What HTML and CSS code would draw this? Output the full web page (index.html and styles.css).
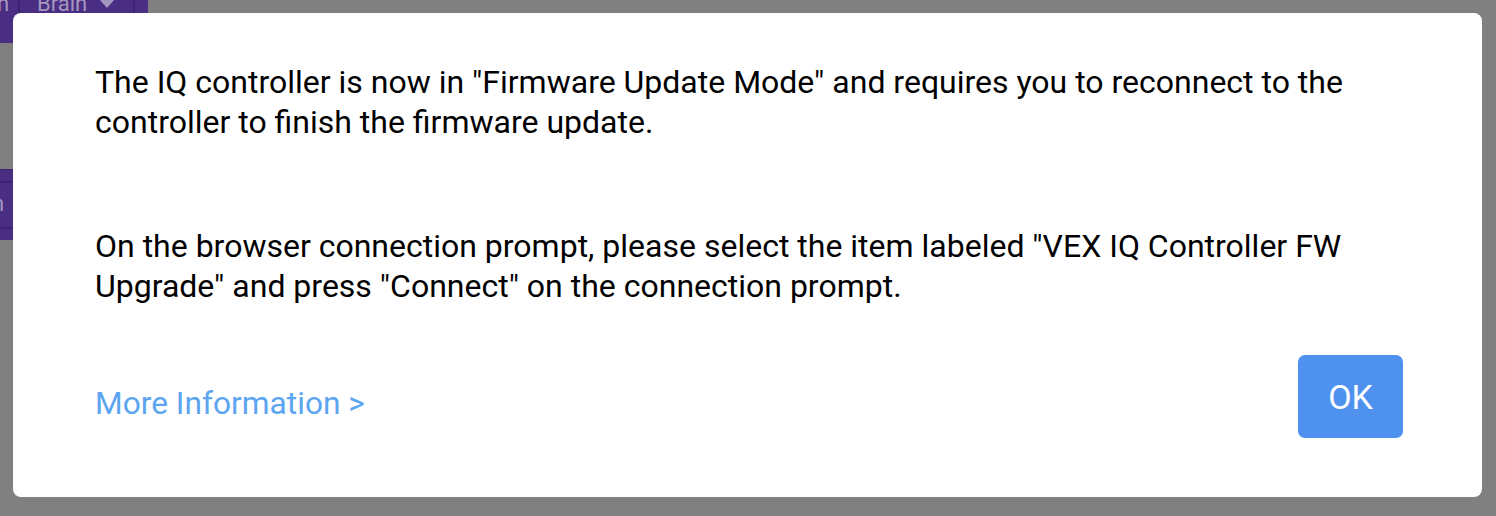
FILE: index.html
```html
<!DOCTYPE html>
<html>
<head>
<meta charset="utf-8">
<link rel="stylesheet" href="styles.css">
</head>
<body>
<div class="backdrop">
  <div class="blk blk-top">
    <span class="seg seg-a">n</span>
    <span class="seg seg-b">Brain <span class="caret"></span></span>
  </div>
  <div class="blk blk-left"><span class="seg-l">n</span></div>
</div>
<div class="dialog">
  <p class="msg">The IQ controller is now in "Firmware Update Mode" and requires you to reconnect to the controller to finish the firmware update.</p>
  <p class="msg msg-2">On the browser connection prompt, please select the item labeled "VEX IQ Controller FW Upgrade" and press "Connect" on the connection prompt.</p>
  <div class="footer">
    <a class="more" href="#">More Information &gt;</a>
    <button class="ok">OK</button>
  </div>
</div>
</body>
</html>
```

FILE: styles.css
```css
html, body {
  margin: 0;
  padding: 0;
}
body {
  background: #808080;
  width: 1496px;
  height: 516px;
  overflow: hidden;
  position: relative;
  font-family: Roboto, "Liberation Sans", Arial, sans-serif;
  padding: 13px 14px 19px 13px;
  box-sizing: border-box;
}
.backdrop {
  position: absolute;
  left: 0;
  top: 0;
}
.blk {
  position: absolute;
  background: #4a2e83;
  color: #a397bf;
  font-size: 22px;
  overflow: hidden;
}
.blk-top {
  left: 0;
  top: 0;
  width: 148px;
  height: 43px;
}
.seg {
  position: absolute;
  top: -8px;
  line-height: 24px;
}
.seg-a {
  left: -3px;
  width: 21px;
  height: 51px;
  border-right: 2px solid #3e2470;
}
.seg-b {
  left: 37px;
  width: 96px;
  height: 51px;
  border-right: 2px solid #3e2470;
}
.caret {
  display: inline-block;
  width: 0;
  height: 0;
  border-left: 8px solid transparent;
  border-right: 8px solid transparent;
  border-top: 9px solid #a397bf;
  margin-left: 6px;
  vertical-align: 3px;
}
.blk-left {
  left: 0;
  top: 169px;
  width: 13px;
  height: 70px;
  border-top: 1px solid #3e2470;
}
.blk-left::before, .blk-left::after {
  content: "";
  position: absolute;
  left: 0;
  right: 0;
  height: 2px;
  background: #3e2470;
}
.blk-left::before { top: 11px; }
.blk-left::after { top: 57px; }
.seg-l {
  position: absolute;
  left: -8px;
  top: 22px;
  line-height: 24px;
}
.dialog {
  position: relative;
  background: #ffffff;
  border-radius: 8px;
  height: 484px;
  box-sizing: border-box;
  padding: 49px 79px 0 82px;
  display: flex;
  flex-direction: column;
}
.msg {
  margin: 0;
  font-size: 32px;
  line-height: 40px;
  color: #000000;
}
.msg-2 {
  margin-top: 84px;
}
.footer {
  margin-top: 49px;
  display: flex;
  justify-content: space-between;
  align-items: flex-start;
}
.more {
  margin-top: 29px;
  font-size: 31.7px;
  line-height: 40px;
  color: #5ca5f0;
  text-decoration: none;
}
.ok {
  width: 105px;
  height: 83px;
  border: none;
  border-radius: 7px;
  background: #4e91ef;
  color: #ffffff;
  font-family: Roboto, "Liberation Sans", Arial, sans-serif;
  font-size: 34px;
  padding: 0;
  margin-right: 0;
}
```
